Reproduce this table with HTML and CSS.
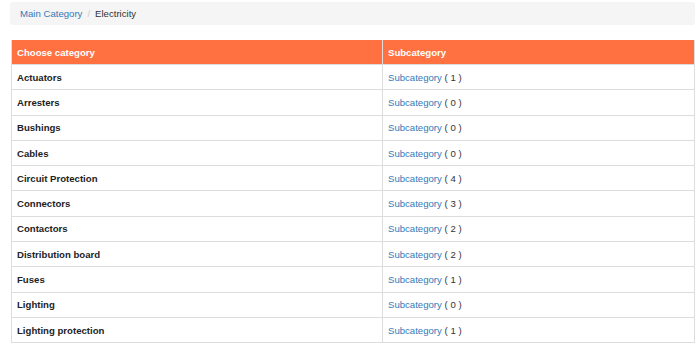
FILE: index.html
```html
<!DOCTYPE html>
<html>
<head>
<meta charset="utf-8">
<link rel="stylesheet" href="styles.css">
</head>
<body>
<div class="page">
  <ol class="breadcrumb">
    <li><a href="#">Main Category</a></li>
    <li class="sep">/</li>
    <li class="active">Electricity</li>
  </ol>
  <table class="cats">
    <thead>
      <tr><th class="c1">Choose category</th><th class="c2">Subcategory</th></tr>
    </thead>
    <tbody>
      <tr><td class="name">Actuators</td><td><a href="#">Subcategory</a> ( 1 )</td></tr>
      <tr><td class="name">Arresters</td><td><a href="#">Subcategory</a> ( 0 )</td></tr>
      <tr><td class="name">Bushings</td><td><a href="#">Subcategory</a> ( 0 )</td></tr>
      <tr><td class="name">Cables</td><td><a href="#">Subcategory</a> ( 0 )</td></tr>
      <tr><td class="name">Circuit Protection</td><td><a href="#">Subcategory</a> ( 4 )</td></tr>
      <tr><td class="name">Connectors</td><td><a href="#">Subcategory</a> ( 3 )</td></tr>
      <tr><td class="name">Contactors</td><td><a href="#">Subcategory</a> ( 2 )</td></tr>
      <tr><td class="name">Distribution board</td><td><a href="#">Subcategory</a> ( 2 )</td></tr>
      <tr><td class="name">Fuses</td><td><a href="#">Subcategory</a> ( 1 )</td></tr>
      <tr><td class="name">Lighting</td><td><a href="#">Subcategory</a> ( 0 )</td></tr>
      <tr><td class="name">Lighting protection</td><td><a href="#">Subcategory</a> ( 1 )</td></tr>
    </tbody>
  </table>
</div>
</body>
</html>
```
FILE: styles.css
```css
html, body {
  margin: 0;
  padding: 0;
  background: #fff;
}
body {
  font-family: "Liberation Sans", Arial, sans-serif;
  font-size: 9.6px;
  color: #333;
}
.page {
  padding: 2px 5px 0 10px;
}
.breadcrumb {
  list-style: none;
  margin: 0;
  padding: 0 10px;
  height: 23px;
  display: flex;
  align-items: center;
  gap: 5px;
  background: #f5f5f5;
  border-radius: 3px;
}
.breadcrumb a {
  color: #337ab7;
  text-decoration: none;
}
.breadcrumb .sep {
  color: #ccc;
}
.breadcrumb .active {
  color: #333;
}
.cats {
  margin-top: 15px;
  margin-left: 1px;
  width: calc(100% - 1px);
  border-collapse: collapse;
  table-layout: fixed;
}
.cats th {
  background: #ff7140;
  color: #fff;
  font-weight: bold;
  text-align: left;
  height: 24px;
  padding: 0 5px;
  border-left: 1px solid #ddd;
  border-right: 1px solid #ddd;
}
.cats th.c1 {
  width: 360px;
}
.cats td {
  height: 25.3px;
  padding: 0 5px;
  border: 1px solid #ddd;
  box-sizing: border-box;
}
.cats td.name {
  font-weight: bold;
  color: #222;
}
.cats td a {
  color: #337ab7;
  text-decoration: none;
}
```
